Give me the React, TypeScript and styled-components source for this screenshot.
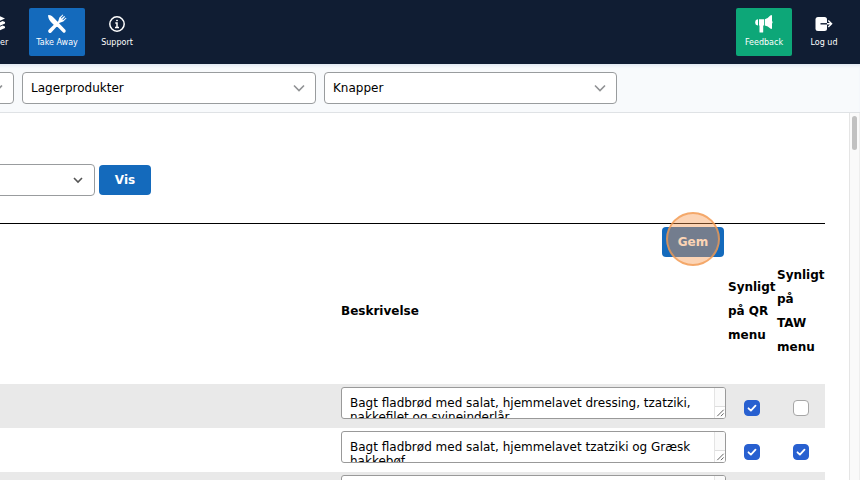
import React from "react";
import styled, { createGlobalStyle, css } from "styled-components";

const GlobalStyle = createGlobalStyle`
  * { box-sizing: border-box; }
  html, body, #root { height: 100%; }
  body {
    margin: 0;
    background: #fff;
    color: #000;
    font-family: "DejaVu Sans", Verdana, sans-serif;
    font-size: 12px;
    overflow: hidden;
  }
  button, select, textarea { font: inherit; color: inherit; }
`;

const Page = styled.div`
  height: 100vh;
  display: flex;
  flex-direction: column;
  overflow: hidden;
`;

const TopBar = styled.header`
  flex: none;
  display: flex;
  justify-content: space-between;
  padding: 8px 8px 8px 0;
  background: #101d33;
`;

const NavGroup = styled.nav<{ $clipped?: boolean }>`
  display: flex;
  gap: 4px;
  margin-left: ${(p) => (p.$clipped ? "-31px" : "0")};
`;

const NavButton = styled.button<{ $tone?: "blue" | "green" }>`
  width: 56px;
  height: 48px;
  padding: 6px 0 0;
  display: flex;
  flex-direction: column;
  align-items: center;
  gap: 3px;
  border: 0;
  border-radius: 2px;
  color: #fff;
  background: ${(p) => (p.$tone === "blue" ? "#146abc" : p.$tone === "green" ? "#0da778" : "transparent")};
  font-size: 8px;
  line-height: 12px;
  white-space: nowrap;
`;

const FilterBar = styled.div`
  flex: none;
  display: flex;
  gap: 8px;
  height: 49px;
  padding: 8px 0;
  margin-left: -279px;
  background: #f8fafc;
  border-bottom: 1px solid #dfe2e5;
  box-shadow: inset 0 3px 3px -1px #e3e9f3;
`;

const SelectBox = styled.div<{ $width: number }>`
  position: relative;
  flex: none;
  width: ${(p) => p.$width}px;
  height: 32px;

  select {
    appearance: none;
    width: 100%;
    height: 100%;
    padding: 0 32px 0 8px;
    border: 1px solid #999c9e;
    border-radius: 4px;
    background: #fff;
  }

  svg {
    position: absolute;
    right: 11px;
    top: 10px;
    pointer-events: none;
  }
`;

const Body = styled.div`
  flex: 1;
  min-height: 0;
  display: flex;
`;

const Content = styled.main`
  flex: 1;
  min-width: 0;
  overflow: hidden;
  padding: 51px 24px 0 0;
`;

const ScrollTrack = styled.div`
  flex: none;
  width: 11px;
  padding: 3px 2px;
  background: #fafafa;
  border-left: 1px solid #e5e5e5;
  border-right: 1px solid #eee;
`;

const ScrollThumb = styled.div`
  height: 34px;
  border-radius: 4px;
  background: #c1c1c1;
`;

const SearchRow = styled.form`
  display: flex;
  align-items: center;
  gap: 4px;
  margin-left: -198px;
  padding-bottom: 27px;
`;

const PrimaryButton = styled.button<{ $width: number }>`
  width: ${(p) => p.$width}px;
  height: 30px;
  padding: 0;
  border: 0;
  border-radius: 4px;
  background: #146abc;
  color: #fff;
  font-weight: 700;
`;

const SaveBar = styled.div`
  display: flex;
  justify-content: flex-end;
  padding: 3px 101px 3px 0;
  border-top: 1px solid #000;
`;

const SaveSpot = styled.div`
  position: relative;
  display: flex;
`;

const ClickMarker = styled.span`
  position: absolute;
  left: 50%;
  top: 50%;
  width: 54px;
  height: 54px;
  margin: -30px 0 0 -27px;
  border: 2px solid rgba(242, 153, 82, 0.75);
  border-radius: 50%;
  background: rgba(249, 152, 78, 0.42);
  pointer-events: none;
`;

const ProductTable = styled.table`
  width: 100%;
  table-layout: fixed;
  border-collapse: collapse;
`;

const Col = styled.col<{ $width?: number }>`
  width: ${(p) => (p.$width ? `${p.$width}px` : "auto")};
`;

const HeadCell = styled.th`
  height: 124px;
  padding: 0 0 22px 1px;
  text-align: left;
  vertical-align: middle;
  line-height: 24px;
  font-weight: 700;
`;

const Row = styled.tr`
  height: 44px;
  &:nth-child(odd) { background: #e9e9e9; }
`;

const Cell = styled.td<{ $center?: boolean }>`
  padding: ${(p) => (p.$center ? "4px 0 0" : "3px 1px 0")};
  vertical-align: ${(p) => (p.$center ? "middle" : "top")};
  text-align: ${(p) => (p.$center ? "center" : "left")};
`;

const TextBox = styled.div`
  position: relative;
  height: 32px;
  border: 1px solid #999;
  border-radius: 3px;
  background: #fff;
  overflow: hidden;

  textarea {
    display: block;
    width: 100%;
    height: 30px;
    padding: 8px 24px 0 8px;
    border: 0;
    background: transparent;
    line-height: 14px;
    resize: none;
    overflow: hidden;
  }
`;

const TextScroll = styled.div`
  position: absolute;
  top: 0;
  right: 0;
  bottom: 0;
  width: 11px;
  display: flex;
  flex-direction: column;
  justify-content: flex-end;
  background: #fafafa;
  border-left: 1px solid #e4e4e4;

  svg { border-top: 1px solid #dedede; background: #fff; }
`;

const boxFill = css`
  border-color: #2860d0;
  background: #2860d0;
`;

const CheckBox = styled.label<{ $on: boolean }>`
  display: inline-flex;
  width: 16px;
  height: 16px;
  align-items: center;
  justify-content: center;
  vertical-align: middle;
  border: 1px solid #a6a6a6;
  border-radius: 4px;
  background: #fff;
  ${(p) => p.$on && boxFill}

  input { position: absolute; width: 16px; height: 16px; margin: 0; opacity: 0; }
`;

function Chevron({ color = "#909294", small }: { color?: string; small?: boolean }) {
  return (
    <svg width="12" height="12" viewBox="0 0 12 12" fill="none" stroke={color} strokeWidth="1.6">
      <path d={small ? "m2 4 4 4 4-4" : "M1 3.500 6 8.500l5-5"} />
    </svg>
  );
}

function LayersIcon() {
  return (
    <svg width="20" height="20" viewBox="0 0 20 20" fill="#fff">
      <path d="m10 1 8 3.6-8 3.6-8-3.6z" />
      <path d="m2 8 2.4-1 5.6 2.5L15.6 7 18 8v1.400l-8 3.600-8-3.600z" />
      <path d="m2 12.500 2.400-1 5.600 2.500 5.600-2.500 2.400 1v1.400L10 17.500l-8-3.600z" />
    </svg>
  );
}

function UtensilsIcon() {
  return (
    <svg width="20" height="20" viewBox="0 0 20 20" fill="#fff">
      <path d="M1.200 1.100C4 1 5.800 2.600 7.500 4.600l10.800 11.200a1.700 1.700 0 0 1-2.400 2.400l-5.200-5.300-2-.2-5-5C1.800 5.800.8 3 1.200 1.100z" />
      <path d="m7.600 9.900 2.400 2.300-5.700 6.200a1.800 1.800 0 0 1-2.600-2.600z" />
      <path d="m11.200 7.200 1.200-3.600L15.700.5l.6.600-2.500 3 .5.500 3-2.600.7.700-2.600 3 .5.500 3-2.500.6.600-3.200 3.300-3.500 1.100-1.300 1.100-1.500-1.500z" />
    </svg>
  );
}

function InfoIcon() {
  return (
    <svg width="20" height="20" viewBox="0 0 20 20" fill="none" stroke="#fff" strokeWidth="1.5">
      <circle cx="10" cy="10" r="7.2" />
      <path d="M8.300 9H10v4.200M8 13.400h4" />
      <circle cx="10" cy="6.500" r=".5" fill="#fff" strokeWidth="1" />
    </svg>
  );
}

function MegaphoneIcon() {
  return (
    <svg width="20" height="20" viewBox="0 0 20 20" fill="#fff">
      <path d="M1.200 8Q1.200 5.500 3.800 5.200H4v6.300h-.2Q1.200 11.300 1.200 9z" />
      <path d="M5 5.200h5v6.300H9.200V18q0 .5-.5.500H6q-.5 0-.5-.5v-6.500H5z" />
      <path d="M10.800 5.300Q14 4.500 16.300 1.600q1.700-1.200 1.700.4v4.700q1.300 1.500 0 3V14q0 1.600-1.700.5-2.300-2.300-5.500-3z" />
    </svg>
  );
}

function LogoutIcon() {
  return (
    <svg width="20" height="20" viewBox="0 0 20 20" fill="none" strokeWidth="1.4">
      <rect x="1.500" y="3" width="11.500" height="14" rx="2.500" fill="#fff" />
      <path stroke="#101d33" d="M6.500 9.800H13" />
      <path stroke="#fff" d="M13 9.800h4.500M14.300 6.500l3.300 3.300-3.300 3.300" />
    </svg>
  );
}

function Tick() {
  return (
    <svg width="12" height="12" viewBox="0 0 12 12" fill="none" stroke="#fff" strokeWidth="1.8" strokeLinecap="round" strokeLinejoin="round">
      <path d="m2.500 6.300 2.400 2.300 4.600-5" />
    </svg>
  );
}

function Dropdown({ label, value, width, dark }: { label: string; value: string; width: number; dark?: boolean }) {
  return (
    <SelectBox $width={width}>
      <select aria-label={label} defaultValue={value}>
        <option>{value}</option>
      </select>
      <Chevron color={dark ? "#555" : undefined} small={dark} />
    </SelectBox>
  );
}

function Check({ label, initial }: { label: string; initial: boolean }) {
  const [on, setOn] = React.useState(initial);
  return (
    <CheckBox $on={on}>
      <input type="checkbox" aria-label={label} checked={on} onChange={() => setOn(!on)} />
      {on && <Tick />}
    </CheckBox>
  );
}

const products = [
  { text: "Bagt fladbrød med salat, hjemmelavet dressing, tzatziki, nakkefilet og svineinderlår", qr: true, taw: false },
  { text: "Bagt fladbrød med salat, hjemmelavet tzatziki og Græsk hakkebøf", qr: true, taw: true },
  { text: "", qr: true, taw: true },
];

export default function App() {
  return (
    <Page>
      <GlobalStyle />
      <TopBar>
        <NavGroup $clipped>
          <NavButton><LayersIcon />Lager</NavButton>
          <NavButton $tone="blue"><UtensilsIcon />Take Away</NavButton>
          <NavButton><InfoIcon />Support</NavButton>
        </NavGroup>
        <NavGroup>
          <NavButton $tone="green"><MegaphoneIcon />Feedback</NavButton>
          <NavButton><LogoutIcon />Log ud</NavButton>
        </NavGroup>
      </TopBar>
      <FilterBar>
        <Dropdown label="Kategori" value="" width={293} />
        <Dropdown label="Produkter" value="Lagerprodukter" width={294} />
        <Dropdown label="Visning" value="Knapper" width={293} />
      </FilterBar>
      <Body>
        <Content>
          <SearchRow onSubmit={(e) => e.preventDefault()}>
            <Dropdown label="Menu" value="" width={293} dark />
            <PrimaryButton $width={52}>Vis</PrimaryButton>
          </SearchRow>
          <SaveBar>
            <SaveSpot>
              <PrimaryButton $width={62}>Gem</PrimaryButton>
              <ClickMarker />
            </SaveSpot>
          </SaveBar>
          <ProductTable>
            <colgroup>
              <Col />
              <Col $width={387} />
              <Col $width={49} />
              <Col $width={49} />
            </colgroup>
            <thead>
              <tr>
                <HeadCell aria-label="Produkt" />
                <HeadCell>Beskrivelse</HeadCell>
                <HeadCell>Synligt på QR menu</HeadCell>
                <HeadCell>Synligt på TAW menu</HeadCell>
              </tr>
            </thead>
            <tbody>
              {products.map((p, i) => (
                <Row key={i}>
                  <Cell />
                  <Cell>
                    <TextBox>
                      <textarea aria-label="Beskrivelse" defaultValue={p.text} />
                      <TextScroll>
                        <svg width="10" height="12" viewBox="0 0 10 12" stroke="#555">
                          <path d="m2 10 7-7M6 10l3-3" />
                        </svg>
                      </TextScroll>
                    </TextBox>
                  </Cell>
                  <Cell $center><Check label="Synligt på QR menu" initial={p.qr} /></Cell>
                  <Cell $center><Check label="Synligt på TAW menu" initial={p.taw} /></Cell>
                </Row>
              ))}
            </tbody>
          </ProductTable>
        </Content>
        <ScrollTrack><ScrollThumb /></ScrollTrack>
      </Body>
    </Page>
  );
}
